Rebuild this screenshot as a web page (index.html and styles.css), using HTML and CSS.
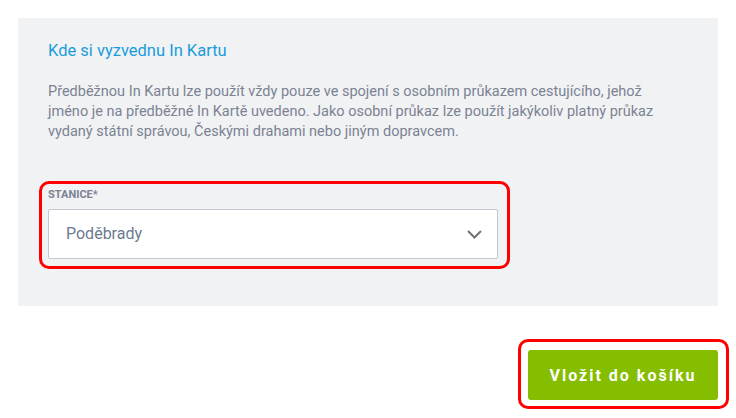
FILE: index.html
```html
<!DOCTYPE html>
<html lang="cs">
<head>
<meta charset="utf-8">
<title>Kde si vyzvednu In Kartu</title>
<link rel="stylesheet" href="styles.css">
</head>
<body>
<div class="page">
  <section class="panel">
    <h2 class="title">Kde si vyzvednu In Kartu</h2>
    <p class="text">Předběžnou In Kartu lze použít vždy pouze ve spojení s osobním průkazem cestujícího, jehož jméno je na předběžné In Kartě uvedeno. Jako osobní průkaz lze použít jakýkoliv platný průkaz vydaný státní správou, Českými drahami nebo jiným dopravcem.</p>
    <div class="highlight field-hl">
      <div class="field">
        <label class="label">STANICE*</label>
        <div class="select">
          <span class="select-value">Poděbrady</span>
          <svg class="chevron" width="15" height="9" viewBox="0 0 15 9" aria-hidden="true"><path d="M1 1 L7.5 7.5 L14 1" fill="none" stroke="#737373" stroke-width="2"/></svg>
        </div>
      </div>
    </div>
  </section>
  <div class="actions">
    <div class="highlight btn-hl">
      <button class="btn">Vložit do košíku</button>
    </div>
  </div>
</div>
</body>
</html>
```
FILE: styles.css
```css
html, body {
  margin: 0;
  padding: 0;
  background: #ffffff;
}
body {
  font-family: Roboto, "Liberation Sans", Arial, sans-serif;
}
.page {
  width: 736px;
  height: 418px;
  overflow: hidden;
  padding-top: 18px;
  box-sizing: border-box;
}
.panel {
  margin: 0 18px;
  background: #f1f2f4;
  padding: 23px 30px 37px 30px;
  height: 288px;
  box-sizing: border-box;
}
.title {
  margin: 0;
  font-size: 16.5px;
  line-height: 20px;
  font-weight: 400;
  color: #1a9cdb;
}
.text {
  margin: 21px 0 0 0;
  font-size: 14.5px;
  line-height: 20px;
  color: #7b8393;
  width: 620px;
}
.highlight {
  border: 3px solid #ff0000;
  border-radius: 10px;
}
.field-hl {
  margin-top: 39px;
  margin-left: -9.5px;
  width: 450px;
  padding: 4px 9px 7px 6.5px;
}
.field {
  display: flex;
  flex-direction: column;
}
.label {
  font-size: 11px;
  line-height: 14px;
  font-weight: 700;
  color: #7b8393;
  margin-bottom: 7px;
}
.select {
  height: 50px;
  box-sizing: border-box;
  width: 450px;
  background: #ffffff;
  border: 1px solid #c3c7ce;
  border-radius: 2px;
  display: flex;
  align-items: center;
  justify-content: space-between;
  padding: 0 15px 0 17px;
}
.select-value {
  font-size: 16px;
  color: #6b7a8f;
  line-height: 20px;
}
.chevron {
  display: block;
}
.actions {
  display: flex;
  justify-content: flex-end;
  margin-top: 33px;
  margin-right: 7px;
}
.btn-hl {
  padding: 8px 8px 6px 7px;
}
.btn {
  display: block;
  width: 190px;
  height: 50px;
  border: 0;
  border-radius: 3px;
  background: #85bd00;
  color: #ffffff;
  font-family: Roboto, "Liberation Sans", Arial, sans-serif;
  font-size: 16px;
  font-weight: 700;
  letter-spacing: 2px;
  padding: 0;
  cursor: pointer;
}
```
